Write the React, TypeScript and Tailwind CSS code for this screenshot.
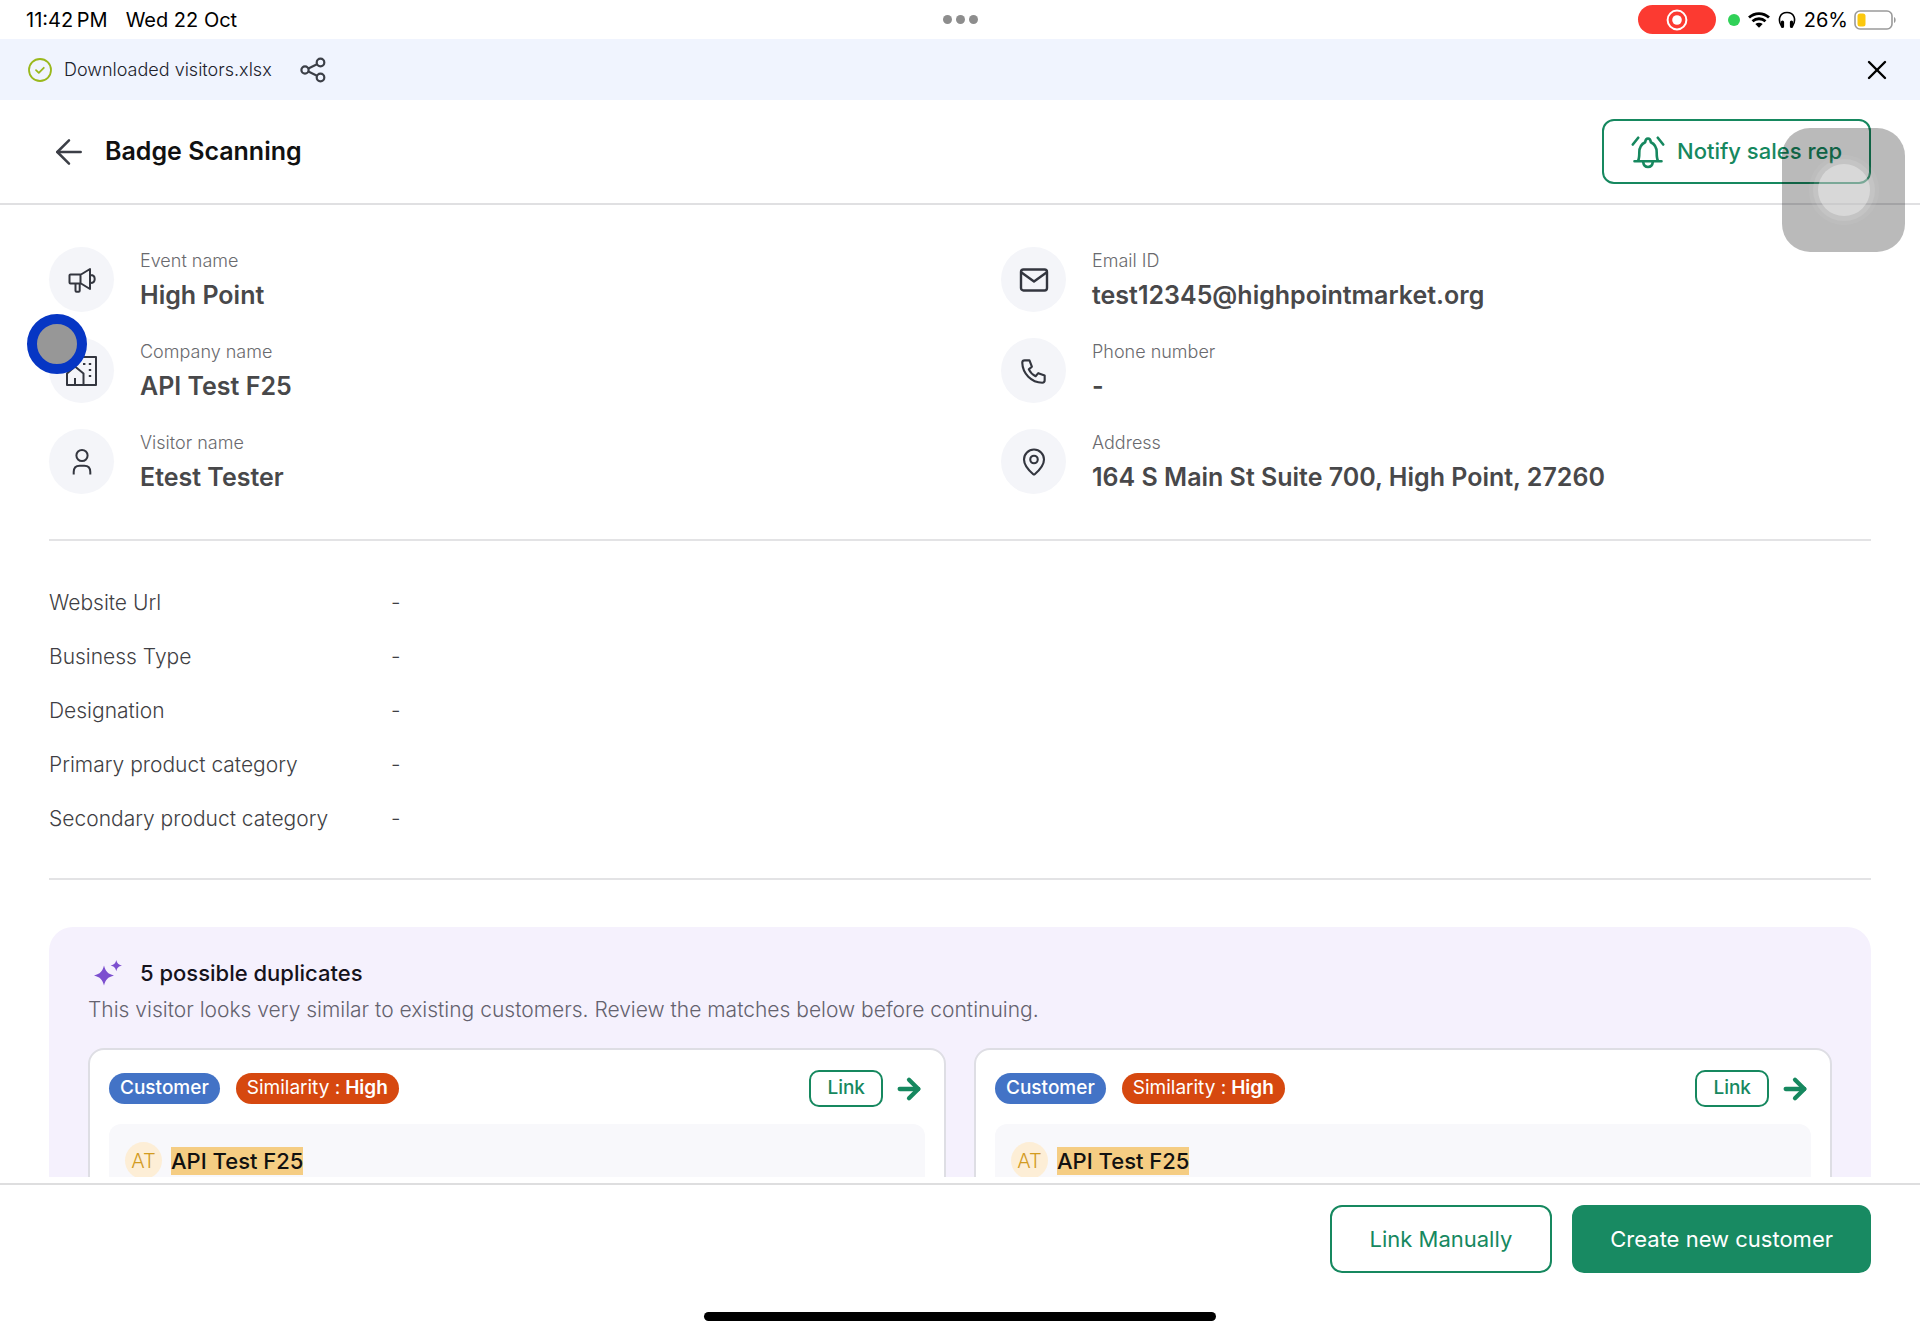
import { ReactNode } from "react";
import { ArrowLeft, MapPin, X, ArrowRight } from "lucide-react";

type TInfo = { label: string, value: string, icon: ReactNode }

const Icons = {
    check: <svg viewBox="0 0 24 24" className="w-6 h-6 text-[#9ab81c]" fill="none" stroke="currentColor" strokeWidth="1.8" strokeLinecap="round" strokeLinejoin="round">
        <circle cx="12" cy="12" r="11" />
        <path d="M8 12.2l2.8 2.6 5-5" />
    </svg>,
    share: <svg viewBox="0 0 26 26" className="w-[26px] h-[26px]" fill="none" stroke="currentColor" strokeWidth="2.2">
        <circle cx="5" cy="13" r="3.6" />
        <circle cx="20.5" cy="5.5" r="3.8" />
        <circle cx="20.5" cy="20.5" r="3.8" />
        <path d="M8.4 11.4l8.6-4.2M8.4 14.6l8.6 4.2" />
    </svg>,
    bell: <svg viewBox="0 0 34 34" className="w-[34px] h-[34px]" fill="none" stroke="currentColor" strokeWidth="2.6" strokeLinecap="round" strokeLinejoin="round">
        <path d="M3.500 26.200h27M7 26c1-1.800 1.300-4 1.300-8.500 0-5 2.200-8.600 5.900-10.300C14.400 4.800 15.400 3.500 17 3.500s2.600 1.300 2.800 3.700c3.700 1.700 5.900 5.300 5.900 10.300 0 4.500.3 6.700 1.300 8.500" />
        <path d="M12.200 27c.4 3.400 2.300 5 4.800 5s4.400-1.600 4.800-5M1.800 9.500l5.400-6.800M32.200 9.500l-5.400-6.800" />
    </svg>,
    campaign: <svg viewBox="0 0 28 28" className="w-7 h-7" fill="none" stroke="currentColor" strokeWidth="2" strokeLinejoin="round">
        <path d="M2.500 8.500h10.500l9-5.500v20l-9-5.500H2.500a1 1 0 0 1-1-1v-7a1 1 0 0 1 1-1zM12.500 8.500v9M7.500 17.500v7.200a1 1 0 0 0 1 1h2.200a1 1 0 0 0 1-1v-7.200M22.500 9c2.400 0 4.200 1.600 4.200 4s-1.800 4-4.200 4" />
    </svg>,
    building: <svg viewBox="0 0 32 32" className="w-8 h-8" fill="none" stroke="currentColor" strokeWidth="2" strokeLinejoin="round">
        <path d="M11 9V2h19v28H1V18.500l8-7 8.500 7V30M9 30v-7" />
        <path d="M17 9h2.400M22.800 9h2.400M22.800 15h2.400M22.800 21h2.400" />
    </svg>,
    person: <svg viewBox="0 0 28 28" className="w-7 h-7" fill="none" stroke="currentColor" strokeWidth="2">
        <circle cx="14" cy="7.500" r="5.600" />
        <path d="M5.700 26.500v-2.500c0-4 2.400-6.300 6-6.300h4.600c3.600 0 6 2.300 6 6.300v2.500" />
    </svg>,
    mail: <svg viewBox="0 0 30 24" className="w-[30px] h-6" fill="none" stroke="currentColor" strokeWidth="2.400" strokeLinejoin="round">
        <rect x="2" y="1.500" width="26" height="21" rx="2.500" />
        <path d="M2.500 4.500L15 13.500 27.500 4.500" />
    </svg>,
    phone: <svg viewBox="0 0 24 24" className="w-8 h-8" fill="none" stroke="currentColor" strokeWidth="1.6" strokeLinecap="round" strokeLinejoin="round">
        <path d="M5 4h3.600l1.800 4.800-2.300 2a11 11 0 0 0 5.100 5.100l2-2.300L20 15.400V19a1.800 1.800 0 0 1-1.800 1.800A15.500 15.500 0 0 1 3.200 5.800 1.800 1.800 0 0 1 5 4" />
    </svg>,
    sparkles: <svg viewBox="0 0 28 26" className="w-7 h-[26px]" fill="#7c4fcf">
        <path d="M10 5.500c1.500 6 3.700 8.200 10 10-6.300 1.800-8.500 4-10 10-1.500-6-3.700-8.200-10-10 6.300-1.800 8.500-4 10-10z" />
        <path d="M22.300 0c.9 3.400 2.100 4.600 5.700 5.600-3.600 1-4.800 2.200-5.700 5.600-.9-3.400-2.100-4.600-5.700-5.600 3.600-1 4.800-2.200 5.700-5.600z" />
    </svg>,
    record: <svg viewBox="0 0 22 22" className="w-[22px] h-[22px]" fill="none" stroke="#fff" strokeWidth="2">
        <circle cx="11" cy="11" r="9.400" />
        <circle cx="11" cy="11" r="4.800" stroke="none" fill="#fff" />
    </svg>,
    wifi: <svg viewBox="0 0 22 16" className="w-[22px] h-4" fill="none" stroke="currentColor" strokeWidth="2.800">
        <path d="M1 5.500c5.800-5.300 14.200-5.300 20 0M4.500 9.200c3.800-3.300 9.200-3.300 13 0" />
        <path d="M7.300 12c2.200-1.800 5.200-1.800 7.400 0L11 15.700z" fill="currentColor" stroke="none" />
    </svg>,
    headphones: <svg viewBox="0 0 18 18" className="w-[18px] h-[18px]" fill="none" stroke="currentColor" strokeWidth="1.600">
        <path d="M3.500 15C-.5 9 1.500 1.500 9 1.500S18.500 9 14.500 15" />
        <path d="M4.500 11v4.500M13.500 11v4.500" strokeWidth="3.200" strokeLinecap="round" />
    </svg>,
    battery: <svg viewBox="0 0 42 20" className="w-[42px] h-5" fill="none">
        <rect x="1" y="1" width="37" height="18" rx="5" stroke="#9a9a9a" strokeWidth="1.600" />
        <rect x="3.500" y="3.500" width="8" height="13" rx="2.500" fill="#fbc80e" />
        <path d="M40 7c2.200 1 2.200 5 0 6z" fill="#9a9a9a" />
    </svg>,
}

const leftInfo: TInfo[] = [
    { label: 'Event name', value: 'High Point', icon: Icons.campaign },
    { label: 'Company name', value: 'API Test F25', icon: Icons.building },
    { label: 'Visitor name', value: 'Etest Tester', icon: Icons.person },
]

const rightInfo: TInfo[] = [
    { label: 'Email ID', value: 'test12345@highpointmarket.org', icon: Icons.mail },
    { label: 'Phone number', value: '-', icon: Icons.phone },
    { label: 'Address', value: '164 S Main St Suite 700, High Point, 27260', icon: <MapPin className="w-[30px] h-[30px]" strokeWidth={1.7} /> },
]

const details = ['Website Url', 'Business Type', 'Designation', 'Primary product category', 'Secondary product category']

const duplicates = [
    { id: 1, initials: 'AT', name: 'API Test F25', similarity: 'High' },
    { id: 2, initials: 'AT', name: 'API Test F25', similarity: 'High' },
]

function StatusBar() {
    return <div className="grid grid-cols-3 items-center h-[39px] shrink-0 pl-[26px] pr-6 text-xl text-black">
        <div className="flex gap-[18px]">
            <span>11:42{'\u2009'}PM</span>
            <span>Wed 22 Oct</span>
        </div>
        <div className="flex justify-center gap-1">
            {[0, 1, 2].map((i) => <span key={i} className="w-[9px] h-[9px] rounded-full bg-[#8d8d8d]" />)}
        </div>
        <div className="flex items-center justify-end gap-2">
            <span className="flex items-center justify-center w-[78px] h-[29px] mr-1 rounded-full bg-[#fc3a31]">{Icons.record}</span>
            <span className="w-3 h-3 rounded-full bg-[#30d158]" />
            {Icons.wifi}
            {Icons.headphones}
            <span>26%</span>
            <span className="-ml-[2px]">{Icons.battery}</span>
        </div>
    </div>
}

function DownloadBanner() {
    return <div className="flex items-center h-[61px] shrink-0 pl-7 pr-[27px] bg-[#f0f4fe] text-[#20222c]">
        {Icons.check}
        <p className="ml-3 text-lg font-light">Downloaded visitors.xlsx</p>
        <button className="ml-7 cursor-pointer text-[#3c3f47]" aria-label="Share">{Icons.share}</button>
        <button className="ml-auto text-black cursor-pointer" aria-label="Close">
            <X className="w-8 h-8" strokeWidth={1.8} />
        </button>
    </div>
}

function Header() {
    return <header className="flex items-center justify-between h-[105px] shrink-0 px-[49px] border-b-2 border-[#e0e0e2]">
        <div className="flex items-center gap-4">
            <button className="cursor-pointer text-[#3c3f47]" aria-label="Back">
                <ArrowLeft className="w-10 h-10" strokeWidth={1.5} />
            </button>
            <h1 className="text-[25px] font-semibold text-[#111]">Badge Scanning</h1>
        </div>
        <button className="flex items-center justify-center gap-3 h-[65px] px-[27px] border-2 border-[#16885f] rounded-xl text-[22px] font-medium text-[#16885f] cursor-pointer">
            {Icons.bell}
            Notify sales rep
        </button>
    </header>
}

function InfoItem({ info }: { info: TInfo }) {
    return <div className="flex items-center gap-[26px] h-[65px]">
        <div className="flex items-center justify-center w-[65px] h-[65px] rounded-full bg-[#f4f5f9] text-[#33363f]">
            {info.icon}
        </div>
        <div className="flex flex-col pt-[3px]">
            <span className="text-lg leading-7 font-light text-[#6a6a6e]">{info.label}</span>
            <span className="text-[25px] leading-[41px] font-semibold text-[#48484a]">{info.value}</span>
        </div>
    </div>
}

function DuplicateCard({ initials, name, similarity }: { initials: string, name: string, similarity: string }) {
    return <div className="px-[19px] pt-5 pb-5 bg-white border-2 border-[#dedee4] rounded-2xl">
        <div className="flex items-center h-[37px]">
            <span className="flex items-center h-[31px] px-[11px] rounded-full bg-[#4373c6] text-[19px] font-medium text-white">Customer</span>
            <span className="flex items-center h-[31px] ml-4 px-[11px] gap-[5px] rounded-full bg-[#d6480f] text-[19px] text-white">Similarity : <b className="font-semibold">{similarity}</b></span>
            <button className="ml-auto h-[37px] px-4 border-2 border-[#16885f] rounded-[10px] text-[19px] font-medium text-[#16885f] cursor-pointer">Link</button>
            <button className="ml-[10px] text-[#16885f] cursor-pointer" aria-label="Open customer">
                <ArrowRight className="w-8 h-8" strokeWidth={3.2} />
            </button>
        </div>
        <div className="flex items-center gap-[9px] mt-[17px] px-4 pt-[18px] pb-10 rounded-xl bg-[#f8f8fb]">
            <span className="flex items-center justify-center w-[37px] h-[37px] rounded-full bg-[#fdeed6] text-xl font-light text-[#d29b1f]">{initials}</span>
            <mark className="bg-[#f5cd83] text-[22px] leading-7 font-medium text-[#111]">{name}</mark>
        </div>
    </div>
}

export default function App() {
    return <div className="relative flex flex-col h-screen overflow-hidden bg-white font-['Inter','Liberation_Sans',sans-serif]">
        <StatusBar />
        <DownloadBanner />
        <Header />

        <main className="flex-1 min-h-0 px-[49px] pt-[42px] mb-[6px] overflow-hidden">
            <section className="grid grid-cols-2 gap-[82px] pb-[45px] border-b-2 border-[#e3e3e5]">
                <div className="flex flex-col gap-[26px]">
                    {leftInfo.map((info) => <InfoItem key={info.label} info={info} />)}
                </div>
                <div className="flex flex-col gap-[26px]">
                    {rightInfo.map((info) => <InfoItem key={info.label} info={info} />)}
                </div>
            </section>

            <dl className="flex flex-col gap-[26px] pt-12 pb-[45px] border-b-2 border-[#e3e3e5] text-[21px] leading-7 font-light text-[#3f3f44]">
                {details.map((d) => <div key={d} className="flex">
                    <dt className="w-[342px]">{d}</dt>
                    <dd>-</dd>
                </div>)}
            </dl>

            <section className="mt-[47px] px-[39px] pt-7 pb-10 rounded-3xl bg-[#f5f1fd]">
                <div className="flex items-center gap-[18px] h-9 pl-[6px]">
                    {Icons.sparkles}
                    <h2 className="text-[22px] font-medium text-[#15131c]">5 possible duplicates</h2>
                </div>
                <p className="mt-[5px] text-[21px] leading-7 font-light text-[#64626e]">
                    This visitor looks very similar to existing customers. Review the matches below before continuing.
                </p>
                <div className="grid grid-cols-2 gap-7 mt-6">
                    {duplicates.map((d) => <DuplicateCard key={d.id} {...d} />)}
                </div>
            </section>
        </main>

        <footer className="shrink-0 border-t-2 border-[#dededf]">
            <div className="flex justify-end gap-5 px-[49px] pt-5">
                <button className="h-[68px] px-[38px] border-2 border-[#16885f] rounded-xl text-[22px] text-[#16885f] cursor-pointer">Link Manually</button>
                <button className="h-[68px] px-[38px] rounded-xl bg-[#188a62] text-[22px] text-white cursor-pointer">Create new customer</button>
            </div>
            <div className="w-[512px] h-[9px] mx-auto mt-[39px] mb-[13px] rounded-full bg-black" />
        </footer>

        {/* touch pointer */}
        <div className="absolute left-[27px] top-[314px] w-[60px] h-[60px] rounded-full border-[10px] border-[#0636c4] bg-[#979797]" />

        {/* assistive touch */}
        <div className="absolute right-[15px] top-[128px] flex items-center justify-center w-[123px] h-[124px] rounded-[28px] bg-black/27">
            <div className="flex items-center justify-center w-[70px] h-[70px] rounded-full bg-white/5">
                <div className="flex items-center justify-center w-[62px] h-[62px] rounded-full bg-white/10">
                    <div className="w-[52px] h-[52px] rounded-full bg-white/35" />
                </div>
            </div>
        </div>
    </div>
}
